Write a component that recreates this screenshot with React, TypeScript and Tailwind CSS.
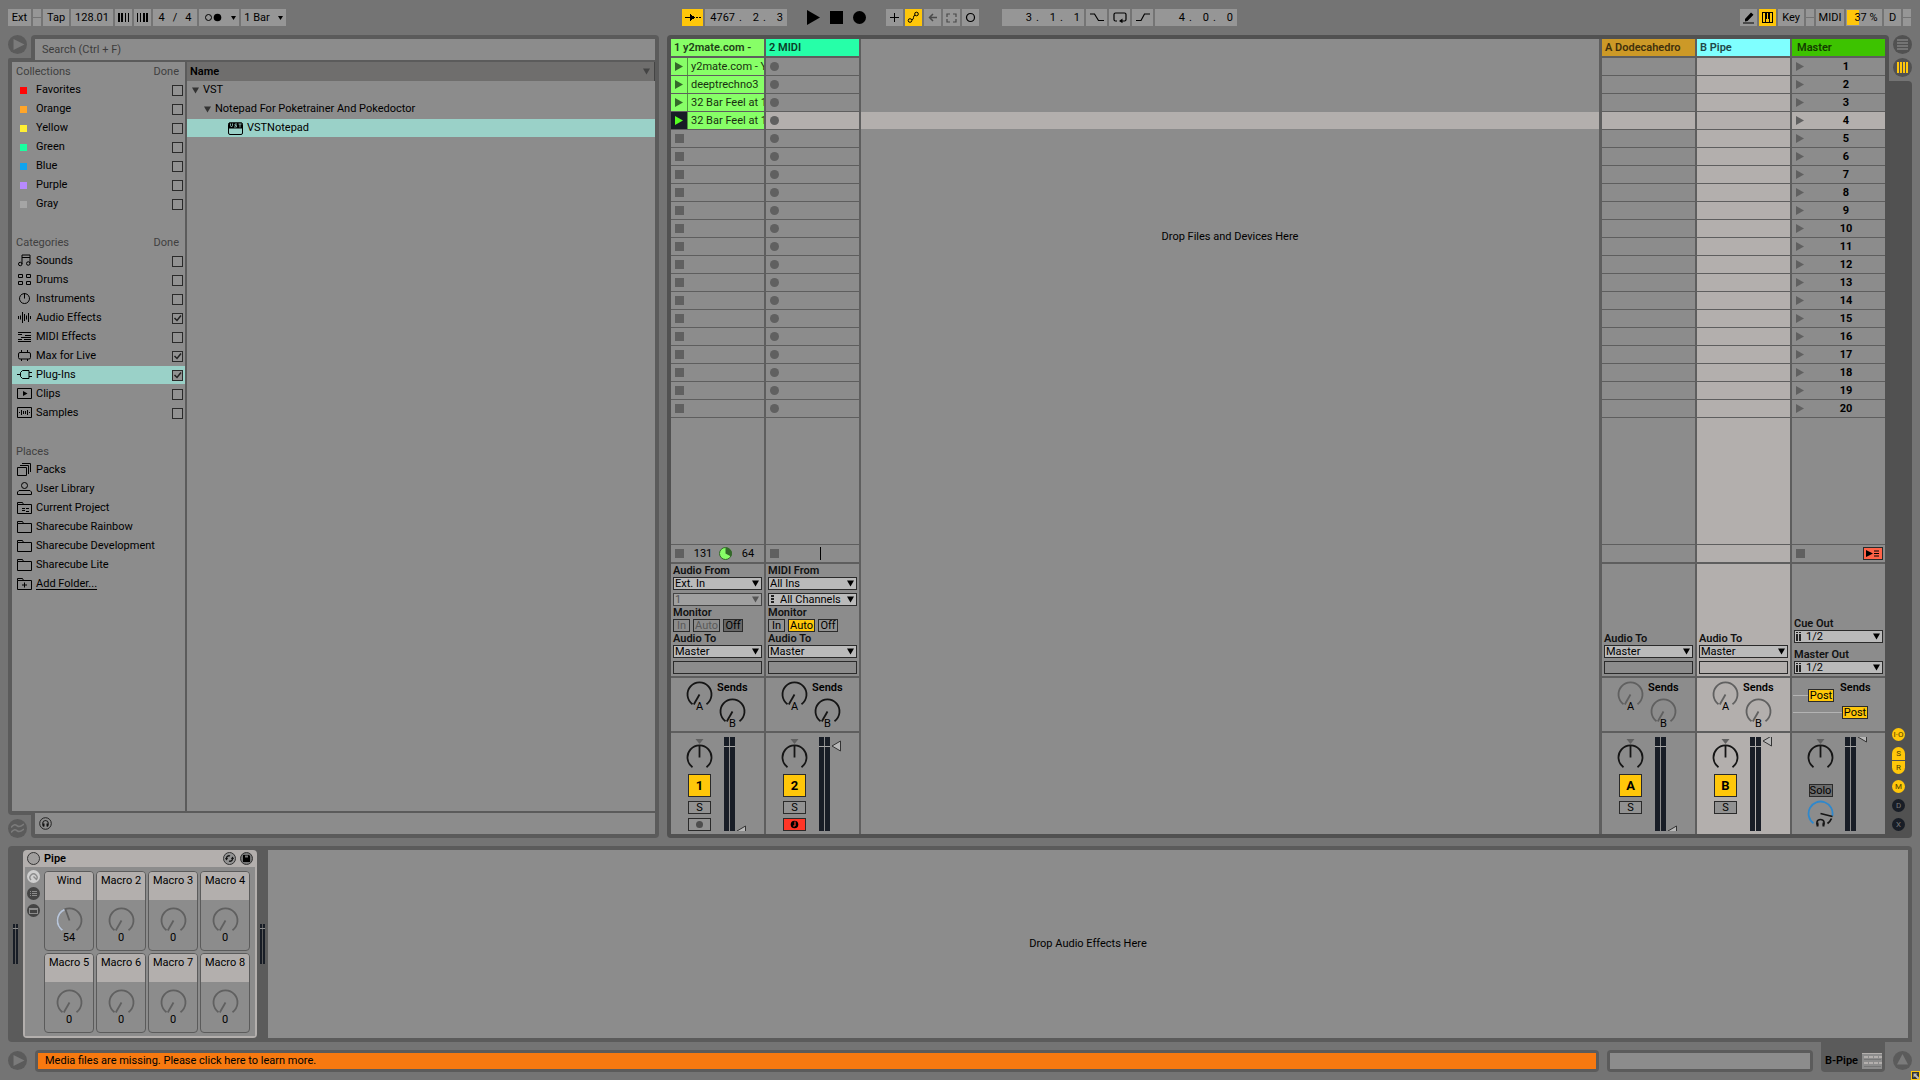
import React from "react";

const frame = "bg-[#5b5b5b]";

/* ---------- toolbar ---------- */

function Tool({ label, className = "", children }: { label?: string; className?: string; children?: React.ReactNode }) {
  return (
    <button aria-label={label} className={`flex h-[17px] shrink-0 items-center justify-center bg-[#969696] leading-none ${className}`}>
      {children}
    </button>
  );
}

function Nudge({ label }: { label: string }) {
  return (
    <span className="flex w-2 flex-col gap-px">
      <button aria-label={`${label} up`} className="h-2 bg-[#969696]" />
      <button aria-label={`${label} down`} className="h-2 bg-[#969696]" />
    </span>
  );
}

function Position({ label, values }: { label: string; values: string[] }) {
  return (
    <div role="group" aria-label={label} className="flex h-[17px] w-[82px] shrink-0 items-center justify-end bg-[#969696] pr-1">
      <span>{values[0]}</span>
      {values.slice(1).map((v, i) => (
        <span key={i} className="flex w-6 justify-between pl-1">
          <span>.</span>
          <span>{v}</span>
        </span>
      ))}
    </div>
  );
}

function Toolbar() {
  return (
    <header className="grid h-[35px] shrink-0 grid-cols-[1fr_auto_1fr] items-center pr-[9px] pl-2">
      <div className="flex gap-[2px]">
        <Tool className="w-[23px]">Ext</Tool>
        <Nudge label="Nudge" />
        <Tool className="w-[26px]">Tap</Tool>
        <Tool className="w-[42px]">128.01</Tool>
        <Tool label="Phase nudge down" className="w-[17px]">
          <svg width="12" height="9" shapeRendering="crispEdges">
            <path d="M0 0h2v9H0zM3 0h2v9H3zM7 0h1v9H7zM10 0h1v9h-1z" />
          </svg>
        </Tool>
        <Tool label="Phase nudge up" className="w-[17px]">
          <svg width="12" height="9" shapeRendering="crispEdges">
            <path d="M0 0h1v9H0zM3 0h1v9H3zM6 0h2v9H6zM9 0h2v9H9z" />
          </svg>
        </Tool>
        <Tool className="w-11 gap-2">
          <span>4</span>
          <span>/</span>
          <span>4</span>
        </Tool>
        <Tool label="Metronome" className="w-10">
          <svg width="32" height="9" className="ml-1">
            <circle cx="3.5" cy="4.5" r="3" fill="none" stroke="#000" />
            <circle cx="12.5" cy="4.5" r="3.8" />
            <path d="M26 3h5l-2.500 4z" />
          </svg>
        </Tool>
        <Tool className="w-[45px] gap-2">
          <span>1 Bar</span>
          <svg width="5" height="4">
            <path d="M0 0h5L2.500 4z" />
          </svg>
        </Tool>
      </div>

      <div className="flex">
        <Tool label="Follow" className="mr-[2px] w-[21px] !bg-[#ffc70a]">
          <svg width="16" height="9" shapeRendering="crispEdges">
            <path d="M0 4h5V1l5 3.500L5 8V5H0zM11 4h2v1h-2zM14 4h2v1h-2z" />
          </svg>
        </Tool>
        <Position label="Arrangement position" values={["4767", "2", "3"]} />
        <div className="ml-5 flex items-center gap-[10px]">
          <button aria-label="Play">
            <svg width="13" height="15" className="block">
              <path d="M0 0l13 7.500L0 15z" />
            </svg>
          </button>
          <button aria-label="Stop" className="size-[13px] bg-black" />
          <button aria-label="Record" className="size-[13px] rounded-full bg-black" />
        </div>
        <div className="ml-5 flex gap-[2px]">
          <Tool label="Overdub" className="w-[17px]">
            <svg width="9" height="9" shapeRendering="crispEdges">
              <path d="M4 0h1v4h4v1H5v4H4V5H0V4h4z" />
            </svg>
          </Tool>
          <Tool label="Automation arm" className="w-[17px] !bg-[#ffc70a]">
            <svg width="13" height="13" fill="none" stroke="#000">
              <circle cx="3" cy="9.500" r="1.800" />
              <circle cx="9.500" cy="3" r="1.800" />
              <path d="M5 9c2 0 1-5 3-5" />
            </svg>
          </Tool>
          <Tool label="Re-enable automation" className="w-[17px]">
            <svg width="9" height="9" fill="none" stroke="#4a4a4a" strokeWidth="1.500">
              <path d="M9 4.500H1M5 1L1.500 4.500 5 8" />
            </svg>
          </Tool>
          <Tool label="Capture" className="w-[17px]">
            <svg width="11" height="10" fill="none" stroke="#4a4a4a" strokeWidth="1.200">
              <path d="M1 4V1h3M7 1h3v3M10 6v3H7M4 9H1V6" />
            </svg>
          </Tool>
          <Tool label="Session record" className="w-[17px]">
            <svg width="11" height="11" fill="none" stroke="#000" strokeWidth="1.200">
              <circle cx="5.500" cy="5.500" r="4" />
            </svg>
          </Tool>
        </div>
        <div className="ml-[23px] flex gap-[2px]">
          <Position label="Loop start" values={["3", "1", "1"]} />
          <Tool label="Punch in" className="w-[21px]">
            <svg width="14" height="9" fill="none" stroke="#000" strokeWidth="1.200">
              <path d="M0 1h4.500l4 6.500H14" />
            </svg>
          </Tool>
          <Tool label="Loop" className="w-[21px]">
            <svg width="14" height="11" fill="none" stroke="#000" strokeWidth="1.200">
              <path d="M4 9H2.500a1.500 1.500 0 0 1-1.500-1.500v-5A1.500 1.500 0 0 1 2.500 1h9A1.500 1.500 0 0 1 13 2.500v5A1.500 1.500 0 0 1 11.500 9H8" />
              <path d="M9.500 6.500L6 9l3.500 2.200z" fill="#000" stroke="none" />
            </svg>
          </Tool>
          <Tool label="Punch out" className="w-[21px]">
            <svg width="14" height="9" fill="none" stroke="#000" strokeWidth="1.200">
              <path d="M0 7.500h5L8.500 1H14" />
            </svg>
          </Tool>
          <Position label="Loop length" values={["4", "0", "0"]} />
        </div>
      </div>

      <div className="flex justify-end gap-[2px]">
        <Tool label="Draw mode" className="w-[17px]">
          <svg width="12" height="12">
            <path d="M2 9.500V7l6-6.500 2.500 2.200-6 6.300zM0 10.500h11v1H0z" />
          </svg>
        </Tool>
        <Tool label="Computer MIDI keyboard" className="w-[17px] !bg-[#ffc70a]">
          <svg width="11" height="11" shapeRendering="crispEdges">
            <path d="M0 0h11v1H0zM0 10h11v1H0zM0 0h1v11H0zM10 0h1v11h-1zM3 0h2v7H3zM6 0h2v7H6zM3 7h1v4H3zM7 7h1v4H7z" />
          </svg>
        </Tool>
        <Tool className="w-[26px]">Key</Tool>
        <Nudge label="Key activity" />
        <Tool className="w-7">MIDI</Tool>
        <div className="flex h-[17px] w-9 items-center justify-center border border-[#969696] bg-[linear-gradient(90deg,#ffc70a_36%,#969696_36%)] pl-1 leading-none">
          37 %
        </div>
        <Tool className="w-[17px]">D</Tool>
        <Nudge label="Disk" />
      </div>
    </header>
  );
}

/* ---------- browser ---------- */

const icons: Record<string, React.ReactNode> = {
  Sounds: <path d="M5 10V1h8v8.500M5 3.500h8M5 10a1.700 1.700 0 1 1-3.500 0A1.700 1.700 0 0 1 5 10zM13 9.500a1.700 1.700 0 1 1-3.500 0 1.700 1.700 0 0 1 3.500 0z" />,
  Drums: <path d="M1.500 1.500h4v3h-4zM9.500 1.500h4v3h-4zM1.500 8.500h4v3h-4zM9.500 8.500h4v3h-4z" />,
  Instruments: <path d="M5 2.200a5 5 0 1 0 5 0A5 5 0 0 0 5 2.200M7.500 1v5.500" />,
  "Audio Effects": <path d="M1.500 5v3M3.500 4.500v4M5.500 1v11M7.500 3v7M9.500 4.500v4M11.500 2v9M13.500 5v3" />,
  "MIDI Effects": <path d="M1 2.500h13M1 4.500h4M8 5.500h6M4 7.500h4M8 7.500h6M1 9.500h4M7 9.500h7M1 11.500h13" strokeWidth="1" />,
  "Max for Live": <path d="M3 3.500h9a1.500 1.500 0 0 1 1.500 1.500v3.500A1.500 1.500 0 0 1 12 10H3a1.500 1.500 0 0 1-1.500-1.500V5A1.500 1.500 0 0 1 3 3.500zM4.500 1v2.500M10.500 1v2.500M4.500 10v2M10.500 10v2" />,
  "Plug-Ins": <path d="M0 6.500h3.500M12 2.500H5.500L3.500 4.500v4l2 2H12zM12 4.500h3M12 8.500h3" />,
  Clips: (
    <>
      <path d="M.5 1.500h14v10H.5z" />
      <path d="M6 4l4.500 2.500L6 9z" fill="#000" stroke="none" />
    </>
  ),
  Samples: <path d="M.5 1.500h14v10H.5zM2.500 6v1M4.500 4v5M6.500 5v3M8.500 5v3M10.500 4v5M12.500 6v1" />,
  Packs: <path d="M.5 4.500h9v8h-9zM3 2.500h8.500V11M5 .5h8.500V9" />,
  "User Library": <path d="M10.500 3.500a3 3 0 1 1-6 0 3 3 0 0 1 6 0zM.5 12.500V10l1.500-1.500h11l1.500 1.500v2.500z" />,
  "Current Project": <path d="M.5 3.500h14v9H.5zM.5 3.500v-2h5l1 2M5 7.500h3M9 7.500h3M5 9.500h3M9 10.500h3" />,
  folder: <path d="M.5 3.500h14v9H.5zM.5 3.500v-2h5l1 2" />,
  "Add Folder...": <path d="M.5 3.500h14v9H.5zM.5 3.500v-2h5l1 2M5 8h5M7.500 5.500v5" />,
};

function RowIcon({ name }: { name: string }) {
  return (
    <svg width="15" height="14" viewBox="0 0 15 14" fill="none" stroke="#000" className="shrink-0">
      {icons[name] ?? icons.folder}
    </svg>
  );
}

function Check({ label, checked = false }: { label: string; checked?: boolean }) {
  return (
    <span className="relative mr-[2px] flex">
      <input type="checkbox" aria-label={`Show ${label}`} defaultChecked={checked} className="peer size-[11px] appearance-none border border-[#2a2a2a] bg-[#929292]" />
      <svg width="11" height="11" fill="none" stroke="#222" strokeWidth="1.500" className="pointer-events-none absolute inset-0 hidden peer-checked:block">
        <path d="M2.500 5l2.500 2.500L9 2.500" />
      </svg>
    </span>
  );
}

function SectionHead({ title, done = true }: { title: string; done?: boolean }) {
  return (
    <div className="mb-px flex h-[18px] items-center justify-between pt-px pr-[6px] pl-1 text-[#404040]">
      <h2>{title}</h2>
      {done && <button>Done</button>}
    </div>
  );
}

const collections = [
  ["Favorites", "bg-[#ff0505]"],
  ["Orange", "bg-[#ffa529]"],
  ["Yellow", "bg-[#fff034]"],
  ["Green", "bg-[#1affa0]"],
  ["Blue", "bg-[#10a4ee]"],
  ["Purple", "bg-[#b88aff]"],
  ["Gray", "bg-[#a5a5a5]"],
];
const categories = ["Sounds", "Drums", "Instruments", "Audio Effects", "MIDI Effects", "Max for Live", "Plug-Ins", "Clips", "Samples"];
const ticked = ["Audio Effects", "Max for Live", "Plug-Ins"];
const places = ["Packs", "User Library", "Current Project", "Sharecube Rainbow", "Sharecube Development", "Sharecube Lite", "Add Folder..."];

function Sidebar() {
  return (
    <nav className="w-[173px] shrink-0 bg-[#8c8c8c]">
      <SectionHead title="Collections" />
      <ul>
        {collections.map(([name, color]) => (
          <li key={name} className="mb-px flex h-[18px] items-center justify-between">
            <button className="flex items-center gap-[9px] pl-2">
              <span className={`size-[7px] ${color}`} />
              {name}
            </button>
            <Check label={name} />
          </li>
        ))}
      </ul>
      <div className="h-[19px]" />
      <SectionHead title="Categories" />
      <ul>
        {categories.map((name) => (
          <li key={name} className={`mb-px flex h-[18px] items-center justify-between ${name === "Plug-Ins" ? "bg-[#9ad1c8]" : ""}`}>
            <button className="flex items-center gap-1 pl-[5px]">
              <RowIcon name={name} />
              {name}
            </button>
            <Check label={name} checked={ticked.includes(name)} />
          </li>
        ))}
      </ul>
      <div className="h-[19px]" />
      <SectionHead title="Places" done={false} />
      <ul>
        {places.map((name) => (
          <li key={name} className="mb-px flex h-[18px] items-center">
            <button className="flex items-center gap-1 pl-[5px]">
              <RowIcon name={name} />
              <span className={name === "Add Folder..." ? "underline underline-offset-2" : ""}>{name}</span>
            </button>
          </li>
        ))}
      </ul>
    </nav>
  );
}

function Down({ className = "" }: { className?: string }) {
  return (
    <svg width="7" height="7" viewBox="0 0 7 7" className={`shrink-0 ${className}`} fill="currentColor">
      <path d="M0 0.500h7L3.500 6.500z" />
    </svg>
  );
}

function RoundButton({ label, children, dark = false }: { label: string; children: React.ReactNode; dark?: boolean }) {
  return (
    <button aria-label={label} className={`flex size-[19px] shrink-0 items-center justify-center rounded-full ${dark ? "bg-[#515151]" : "bg-[#5b5b5b]"}`}>
      {children}
    </button>
  );
}

function Browser() {
  return (
    <section aria-label="Browser" className="flex w-[651px] shrink-0 flex-col">
      <div className="flex h-[25px] shrink-0">
        <div className="flex w-[23px] flex-col justify-between">
          <RoundButton label="Hide browser">
            <svg width="19" height="19" fill="#7b7b7b">
              <path d="M5.500 4l11 5.500-11 5.500z" />
            </svg>
          </RoundButton>
          <div className={`h-[2px] rounded-tl-sm ${frame}`} />
        </div>
        <div className={`flex flex-1 rounded-t px-1 pt-1 ${frame}`}>
          <input
            type="search"
            aria-label="Search"
            placeholder="Search (Ctrl + F)"
            className="h-[21px] w-full bg-[#8c8c8c] px-[7px] text-black outline-none placeholder:text-[#3c3c3c] placeholder:opacity-100"
          />
        </div>
      </div>
      <div className={`flex min-h-0 flex-1 gap-[2px] px-1 py-[2px] pb-0 ${frame}`}>
        <Sidebar />
        <div className="flex-1 bg-[#8c8c8c]">
          <table className="w-full border-collapse text-left">
            <thead>
              <tr className="h-[19px] bg-[#6f6e6d]">
                <th className="p-0 pl-[3px] font-semibold">
                  <span className="flex items-center justify-between border-r border-[#444] pr-1 leading-[19px]">
                    Name
                    <Down className="text-[#444]" />
                  </span>
                </th>
              </tr>
            </thead>
            <tbody>
              <tr>
                <td className="p-0 pb-px">
                  <span className="flex h-[18px] items-center gap-1 pl-[5px]">
                    <Down className="text-[#333]" />
                    VST
                  </span>
                </td>
              </tr>
              <tr>
                <td className="p-0 pb-px">
                  <span className="flex h-[18px] items-center gap-1 pl-[17px]">
                    <Down className="text-[#333]" />
                    Notepad For Poketrainer And Pokedoctor
                  </span>
                </td>
              </tr>
              <tr>
                <td className="p-0 pb-px">
                  <span className="flex h-[18px] items-center gap-1 bg-[#9ad1c8] pl-[41px]">
                    <svg width="15" height="13" fill="none" stroke="#000">
                      <rect x=".5" y="1" width="14" height="11.500" rx="1.500" />
                      <path d="M1 1h13v5H1z" fill="#000" />
                      <path d="M2.500 1.500v2l1 1.500 1-1.500v-2M9 2H7v1.500h1.500V5H6M10.500 2h3M12 2v3.500" stroke="#9ad1c8" strokeWidth=".8" />
                    </svg>
                    VSTNotepad
                  </span>
                </td>
              </tr>
            </tbody>
          </table>
        </div>
      </div>
      <div className="flex h-[27px] shrink-0">
        <div className="flex w-[23px] shrink-0 flex-col gap-1">
          <div className={`h-1 rounded-bl ${frame}`} />
          <RoundButton label="Groove pool">
            <svg width="13" height="11" fill="none" stroke="#7b7b7b" strokeWidth="1.600">
              <path d="M0 4.500c3-4 4.500-3 6.500-1.500S10.500 3 13 1M0 9.500c3-4 4.500-3 6.500-1.500S10.500 8 13 6" />
            </svg>
          </RoundButton>
        </div>
        <div className={`flex flex-1 rounded-b px-1 pt-[2px] pb-1 ${frame}`}>
          <div className="flex flex-1 items-center bg-[#8c8c8c] pl-1">
            <button aria-label="Preview">
              <svg width="13" height="13" fill="none" stroke="#222" className="block">
                <circle cx="6.500" cy="6.500" r="5.800" />
                <path d="M4.500 9.500C3 7 3.500 3.500 6.500 3.500S10 7 8.500 9.500" strokeWidth="1.200" />
                <path d="M4 6.500h1.500v3H4zM7.500 6.500H9v3H7.500z" fill="#111" stroke="none" />
              </svg>
            </button>
          </div>
        </div>
      </div>
    </section>
  );
}

/* ---------- session ---------- */

function Knob({
  label,
  tone = "#151515",
  value = "",
  angle = 210,
  className = "",
  labelTop = "top-5",
}: {
  label?: string;
  tone?: string;
  value?: string;
  angle?: number;
  className?: string;
  labelTop?: string;
}) {
  const a = (angle * Math.PI) / 180;
  return (
    <div role="img" aria-label={`${label ?? value} knob`} className={`relative h-[27px] w-[27px] shrink-0 ${className}`}>
      <svg width="27" height="27" fill="none" stroke={tone} strokeWidth="1.800" className="block">
        <path d="M6.500 23.200A12 12 0 1 1 20.500 23.200" />
        <path d={`M13.5 13.500L${13.5 + 11.5 * Math.sin(a)} ${13.5 - 11.5 * Math.cos(a)}`} />
      </svg>
      {label && <span className={`absolute inset-x-0 text-center leading-3 ${labelTop}`}>{label}</span>}
    </div>
  );
}

function Select({ label, text, muted = false, prefix = "" }: { label: string; text: string; muted?: boolean; prefix?: "" | "dots" | "bars" }) {
  return (
    <span className={`relative flex h-[13px] border ${muted ? "border-[#444] bg-[#a0a0a0] text-[#555]" : "border-[#2a2a2a] bg-[#bababa] text-black"}`}>
      {prefix === "dots" && (
        <svg width="10" height="11" className="shrink-0">
          <path d="M2 1h3v2H2zM2 4h3v2H2zM2 7h3v2H2z" fill="#222" />
        </svg>
      )}
      {prefix === "bars" && (
        <svg width="10" height="11" className="shrink-0">
          <path d="M1 1h2v1H1zM1 3h2v7H1zM4 1h2v1H4zM4 3h2v7H4z" fill="#222" />
        </svg>
      )}
      <select aria-label={label} disabled={muted} className="h-[11px] w-full appearance-none pl-px leading-[11px] opacity-100">
        <option>{text}</option>
      </select>
      <Down className="pointer-events-none absolute top-[2px] right-[2px]" />
    </span>
  );
}

function Square() {
  return <span className="size-[9px] shrink-0 bg-[#606060]" />;
}

function PlayTri({ color }: { color: string }) {
  return (
    <svg width="8" height="9" className="shrink-0" fill={color}>
      <path d="M0 0l8 4.500L0 9z" />
    </svg>
  );
}

function Meter({ handle }: { handle: number }) {
  return (
    <div className="flex gap-px">
      <svg width="11" height="94" shapeRendering="crispEdges" className="block">
        <path d="M0 0h5v94H0zM6 0h5v94H6z" fill="#181d26" />
        <path d="M0 9h11v1H0z" fill="#a5a5a5" />
      </svg>
      <svg width="11" height="94" className="block overflow-hidden" fill="#b8b8b8" stroke="#333">
        <path d={`M1 ${handle}L9.500 ${handle - 5}V${handle + 5}z`} />
      </svg>
    </div>
  );
}

function SmallButton({ children, className, label }: { children: React.ReactNode; className: string; label?: string }) {
  return (
    <button aria-label={label} className={`flex h-[13px] shrink-0 items-center justify-center border border-[#2a2a2a] leading-none ${className}`}>
      {children}
    </button>
  );
}

type Kind = "audio" | "midi" | "return" | "master";

function MonitorRow({ active }: { active: "Auto" | "Off" }) {
  const off = active === "Off";
  return (
    <div className="flex gap-[3px]">
      <SmallButton className={`w-[17px] ${off ? "text-[#5a5a5a]" : "bg-[#929292]"}`}>In</SmallButton>
      <SmallButton className={`w-[27px] ${off ? "text-[#5a5a5a]" : "bg-[#ffc70a]"}`}>Auto</SmallButton>
      <SmallButton className={`w-5 ${off ? "bg-[#686868]" : "bg-[#929292]"}`}>Off</SmallButton>
    </div>
  );
}

function InOut({ kind }: { kind: Kind }) {
  const label = "h-[13px] font-semibold leading-[14px] text-[#111]";
  if (kind === "master")
    return (
      <>
        <span className={label}>Cue Out</span>
        <Select label="Cue Out" text="1/2" prefix="bars" />
        <span className={`mt-[5px] ${label}`}>Master Out</span>
        <Select label="Master Out" text="1/2" prefix="bars" />
      </>
    );
  return (
    <>
      {kind !== "return" && (
        <>
          <span className={label}>{kind === "audio" ? "Audio From" : "MIDI From"}</span>
          <Select label="Input type" text={kind === "audio" ? "Ext. In" : "All Ins"} />
          <div className="mt-[3px] flex flex-col">
            {kind === "audio" ? <Select label="Input channel" text="1" muted /> : <Select label="Input channel" text="All Channels" prefix="dots" />}
          </div>
          <span className={label}>Monitor</span>
          <MonitorRow active={kind === "audio" ? "Off" : "Auto"} />
        </>
      )}
      <span className={label}>Audio To</span>
      <Select label="Audio To" text="Master" />
      <div className="mt-[3px] h-[13px] border border-[#2a2a2a]" />
    </>
  );
}

function SlotRow({ kind, index, clip, selected }: { kind: Kind; index: number; clip?: string; selected: boolean }) {
  if (clip) {
    const playing = index === 3;
    return (
      <div className="flex h-[17px] shrink-0 gap-px bg-[#4f9a3c]">
        <button aria-label={`Launch ${clip}`} className={`flex w-4 shrink-0 items-center pl-1 ${playing ? "bg-[#181d26]" : "bg-[#87ff67]"}`}>
          <PlayTri color={playing ? "#55ff22" : "#34682a"} />
        </button>
        <span className="min-w-0 flex-1 overflow-hidden bg-[#87ff67] pl-[3px] leading-[17px] whitespace-nowrap text-[#183010]">{clip}</span>
      </div>
    );
  }
  return (
    <div className={`flex h-[17px] shrink-0 items-center pl-1 ${selected ? "bg-[#b3afad]" : "bg-[#8c8c8c]"}`}>
      {kind === "audio" && <Square />}
      {kind === "midi" && <span className="size-[9px] rounded-full bg-[#606060]" />}
      {kind === "master" && (
        <>
          <PlayTri color="#606060" />
          <span className="flex-1 pl-[3px] text-center font-bold">{index + 1}</span>
        </>
      )}
    </div>
  );
}

const clips = ["y2mate.com - Y", "deeptrechno3", "32 Bar Feel at 1", "32 Bar Feel at 1"];

function Sends({ kind }: { kind: Kind }) {
  if (kind === "master")
    return (
      <div className="flex flex-col pt-1 pl-px">
        <div className="flex items-start">
          <span className="mt-[13px] h-px w-[15px] shrink-0 bg-[#b3b3b3]" />
          <SmallButton className="mt-[7px] w-[26px] bg-[#ffc70a]">Post</SmallButton>
          <span className="ml-[6px] leading-3 font-semibold">Sends</span>
        </div>
        <div className="mt-1 flex items-center">
          <span className="h-px w-[49px] shrink-0 bg-[#b3b3b3]" />
          <SmallButton className="w-[26px] bg-[#ffc70a]">Post</SmallButton>
        </div>
      </div>
    );
  const tone = kind === "return" ? "#606060" : "#151515";
  return (
    <div className="flex gap-1 pl-[15px]">
      <Knob label="A" tone={tone} className="mt-[3px]" />
      <div className="flex flex-col items-center pt-1">
        <span className="h-4 leading-3 font-semibold">Sends</span>
        <Knob label="B" tone={tone} />
      </div>
    </div>
  );
}

function Mixer({ kind, name, handle }: { kind: Kind; name: string; handle: number }) {
  return (
    <div className="flex gap-[11px] pt-1 pl-[15px]">
      <div className="flex w-[27px] flex-col items-center">
        <svg width="9" height="5" className="mt-[2px]" fill="#606060">
          <path d="M0.500 0h8L4.500 5z" />
        </svg>
        <Knob value="Pan" angle={0} />
        {kind === "master" ? (
          <>
            <SmallButton className="mt-[13px] w-6 bg-[#6c6c6c]">Solo</SmallButton>
            <svg width="27" height="27" fill="none" strokeWidth="1.800" className="mt-[3px] shrink-0">
              <path d="M6.500 23.200A12 12 0 1 1 25.300 16" stroke="#2f88cc" />
              <path d="M13.500 13.500l12 3M24.500 18.500a12 12 0 0 1-4 5" stroke="#151515" />
              <path d="M11 25.500c-2-2-1.500-6 2.500-6s4.500 4 2.500 6" stroke="#151515" strokeWidth="1.500" />
              <path d="M9.500 22.500h2v4h-2zM15.500 22.500h2v4h-2z" fill="#151515" stroke="none" />
            </svg>
          </>
        ) : (
          <>
            <button className="mt-[3px] flex size-[23px] shrink-0 items-center justify-center border border-[#2a2a2a] bg-[#ffc70a] text-[13px] leading-none font-bold">{name}</button>
            <SmallButton className="mt-1 w-[23px] bg-[#929292]">S</SmallButton>
            {kind === "audio" && (
              <SmallButton label="Arm" className="mt-1 w-[23px] bg-[#929292]">
                <span className="size-[7px] rounded-full bg-[#4e4e4e]" />
              </SmallButton>
            )}
            {kind === "midi" && (
              <SmallButton label="Disarm" className="mt-1 w-[23px] bg-[#ff3526]">
                <svg width="9" height="9">
                  <circle cx="4.500" cy="4.500" r="3.800" />
                  <path d="M5 1.500v4.500M3 6h2" stroke="#ff3526" strokeWidth="1.200" />
                </svg>
              </SmallButton>
            )}
          </>
        )}
      </div>
      <Meter handle={handle} />
    </div>
  );
}

function Status({ kind }: { kind: Kind }) {
  return (
    <>
      {kind !== "return" && <Square />}
      {kind === "audio" && (
        <>
          <span className="w-[35px] shrink-0 pl-[3px] text-center">131</span>
          <svg width="13" height="13" className="shrink-0">
            <circle cx="6.500" cy="6.500" r="6" fill="#87ff67" stroke="#34682a" />
            <path d="M6.500 6.500V.5A6 6 0 0 1 12 9.500z" fill="#34682a" />
          </svg>
          <span className="flex-1 text-center">64</span>
        </>
      )}
      {kind === "midi" && <span className="ml-[41px] h-[13px] w-px bg-black" />}
      {kind === "master" && (
        <SmallButton label="Back to arrangement" className="mr-[2px] ml-auto w-5 bg-[#ff6247]">
          <svg width="14" height="9">
            <path d="M0 1l7 3.500L0 8zM8 1.500h5v1H8zM8 4h5v1H8zM8 6.500h5v1H8z" />
          </svg>
        </SmallButton>
      )}
    </>
  );
}

function Track({ kind, title, color, name = "", handle, selected = false }: { kind: Kind; title: string; color: string; name?: string; handle: number; selected?: boolean }) {
  const bg = selected ? "bg-[#b3afad]" : "bg-[#8c8c8c]";
  return (
    <article aria-label={title} className="flex w-[93px] shrink-0 flex-col">
      <h3 className={`mb-[2px] h-[17px] shrink-0 overflow-hidden leading-[17px] font-semibold whitespace-nowrap ${kind === "master" ? "pl-[5px]" : "pl-[3px]"} ${color}`}>{title}</h3>
      <div className="flex flex-col gap-px">
        {Array.from({ length: 20 }, (_, i) => (
          <SlotRow key={i} kind={kind} index={i} clip={kind === "audio" ? clips[i] : undefined} selected={selected || i === 3} />
        ))}
      </div>
      <div className={`mt-px min-h-0 flex-1 ${bg}`} />
      <div className={`mt-px flex h-[17px] shrink-0 items-center pl-1 ${bg}`}>
        <Status kind={kind} />
      </div>
      <div className={`mt-[2px] flex h-28 shrink-0 flex-col justify-end px-[2px] pb-[2px] ${bg}`}>
        <InOut kind={kind} />
      </div>
      <div className={`mt-[2px] h-[53px] shrink-0 ${bg}`}>
        <Sends kind={kind} />
      </div>
      <div className={`mt-[2px] h-[101px] shrink-0 ${bg}`}>
        <Mixer kind={kind} name={name} handle={handle} />
      </div>
    </article>
  );
}

function Dot({ children, className }: { children: string; className: string }) {
  return <button className={`flex h-[13px] w-[13px] items-center justify-center text-[8px] leading-none ${className}`}>{children}</button>;
}

function Session() {
  return (
    <section aria-label="Session" className="flex min-w-0 flex-1">
      <div className="flex min-w-0 flex-1 rounded-t rounded-bl bg-[#515151] p-1">
        <div className="flex min-w-0 flex-1 gap-[2px] bg-[#5e5e5e]">
          <Track kind="audio" title="1 y2mate.com -" color="bg-[#87ff67] text-[#204018]" name="1" handle={94} />
          <Track kind="midi" title="2 MIDI" color="bg-[#26ffa8] text-[#0a4028]" name="2" handle={9} />
          <div className="flex min-w-0 flex-1 flex-col bg-[#8c8c8c]">
            <div className="h-[73px] shrink-0" />
            <div className="h-[17px] shrink-0 bg-[#b3afad]" />
            <p className="pt-[100px] text-center">Drop Files and Devices Here</p>
          </div>
          <div className="ml-px flex gap-[2px]">
            <Track kind="return" title="A Dodecahedro" color="bg-[#cc9927] text-[#40300c]" name="A" handle={94} />
            <Track kind="return" title="B Pipe" color="bg-[#7fffff] text-[#204848]" name="B" handle={4} selected />
            <Track kind="master" title="Master" color="bg-[#3dc300] text-[#133c00]" handle={0} />
          </div>
        </div>
      </div>
      <div className="flex w-[23px] shrink-0 flex-col">
        <div className="flex h-[46px] shrink-0 flex-col gap-1 pl-1">
          <RoundButton label="Arrangement view" dark>
            <svg width="11" height="11" shapeRendering="crispEdges">
              <path d="M0 0h11v2H0zM0 3h11v2H0zM0 6h11v2H0zM0 9h11v2H0z" fill="#747474" />
            </svg>
          </RoundButton>
          <RoundButton label="Session view" dark>
            <svg width="11" height="11" shapeRendering="crispEdges">
              <path d="M0 0h2v11H0zM3 0h2v11H3zM6 0h2v11H6zM9 0h2v11H9z" fill="#ffc70a" />
            </svg>
          </RoundButton>
        </div>
        <div className="flex flex-1 flex-col justify-end rounded-tr rounded-br bg-[#515151] pb-[7px] pl-[3px] text-[#4c3c00]">
          <Dot className="mb-[6px] rounded-full bg-[#ffc70a]">I·O</Dot>
          <Dot className="mb-px rounded-t-full bg-[#ffc70a]">S</Dot>
          <Dot className="mb-[6px] rounded-b-full bg-[#ffc70a]">R</Dot>
          <Dot className="mb-[6px] rounded-full bg-[#ffc70a]">M</Dot>
          <Dot className="mb-[6px] rounded-full bg-[#181d26] text-[#777]">D</Dot>
          <Dot className="rounded-full bg-[#181d26] text-[#777]">X</Dot>
        </div>
      </div>
    </section>
  );
}

/* ---------- device view ---------- */

function MiniMeter() {
  return (
    <svg width="5" height="40" shapeRendering="crispEdges" className="shrink-0">
      <path d="M0 0h2v40H0zM3 0h2v40H3z" fill="#181d26" />
      <path d="M0 4h5v1H0z" fill="#8c8c8c" />
    </svg>
  );
}

function Macro({ name, value }: { name: string; value: string }) {
  const wind = name === "Wind";
  return (
    <div className="flex h-20 w-[50px] flex-col items-center overflow-hidden rounded-[4px] border border-[#5b5b5b]">
      <span className="h-7 w-full shrink-0 bg-[#b3afad] text-center leading-[17px] whitespace-nowrap">{name}</span>
      <div className="relative mt-[7px]">
        <Knob label={value} tone="#606060" angle={wind ? -20 : 210} labelTop="top-[25px]" />
        {wind && (
          <svg width="27" height="27" fill="none" stroke="#b9c6da" strokeWidth="1.800" className="absolute inset-0">
            <path d="M6.500 23.200A12 12 0 0 1 8.500 2.600" />
          </svg>
        )}
      </div>
    </div>
  );
}

function HeadButton({ label, children, className = "" }: { label: string; children: React.ReactNode; className?: string }) {
  return (
    <button aria-label={label} className={`flex size-[13px] shrink-0 items-center justify-center rounded-full ${className}`}>
      {children}
    </button>
  );
}

function Devices() {
  const macros = ["Wind", "Macro 2", "Macro 3", "Macro 4", "Macro 5", "Macro 6", "Macro 7", "Macro 8"];
  return (
    <section aria-label="Device view" className={`mx-2 mt-2 flex h-[196px] shrink-0 items-center rounded-t rounded-bl p-1 pl-[5px] ${frame}`}>
      <MiniMeter />
      <div className="ml-[5px] flex h-full w-[234px] shrink-0 flex-col rounded-[4px] bg-[#b3afad] px-[2px] pb-[2px]">
        <div className="flex h-[17px] shrink-0 items-center gap-1 px-[2px]">
          <HeadButton label="Device activator" className="border border-[#333] bg-[#a09e9d]">
            {null}
          </HeadButton>
          <span className="flex-1 font-semibold">Pipe</span>
          <HeadButton label="Hot-swap" className="border border-[#333] bg-[#929292]">
            <svg width="9" height="9" fill="none" stroke="#111" strokeWidth="1.300">
              <path d="M1.500 5.500V4A2.500 2.500 0 0 1 5 2M7.500 3.500V5A2.500 2.500 0 0 1 4 7" />
              <path d="M0 4h3L1.500 6.500zM6 5h3L7.500 2.500z" fill="#111" stroke="none" />
            </svg>
          </HeadButton>
          <HeadButton label="Save preset" className="border border-[#333] bg-[#777]">
            <svg width="7" height="7">
              <path fillRule="evenodd" d="M0 0h6l1 1v6H0zM2 0.500v2h3v-2z" />
            </svg>
          </HeadButton>
        </div>
        <div className="flex flex-1 bg-[#8c8c8c] pt-1 pl-[2px]">
          <div className="-mt-px flex w-[17px] flex-col gap-1">
            <HeadButton label="Show macros" className="bg-[#cfcfcf]">
              <svg width="9" height="9" fill="none" stroke="#8c8c8c" strokeWidth="1.400">
                <path d="M2 8A3.500 3.500 0 1 1 7 8M4.500 4.500L7.500 7.500" />
              </svg>
            </HeadButton>
            <HeadButton label="Show chains" className="bg-[#444]">
              <svg width="7" height="7" shapeRendering="crispEdges" fill="#8c8c8c">
                <path d="M0 1h1v1H0zM2 1h5v1H2zM0 3h1v1H0zM2 3h5v1H2zM0 5h1v1H0zM2 5h5v1H2z" />
              </svg>
            </HeadButton>
            <HeadButton label="Show devices" className="bg-[#444]">
              <svg width="9" height="6" fill="none" stroke="#8c8c8c" shapeRendering="crispEdges">
                <path d="M.5.5h8v5h-8zM0 1.500h9" />
              </svg>
            </HeadButton>
          </div>
          <div className="grid grid-cols-4 content-start gap-[2px]">
            {macros.map((m, i) => (
              <Macro key={m} name={m} value={i === 0 ? "54" : "0"} />
            ))}
          </div>
        </div>
      </div>
      <div className="ml-[3px] flex">
        <MiniMeter />
      </div>
      <div className="ml-[3px] flex h-full flex-1 items-center justify-center bg-[#8c8c8c]">Drop Audio Effects Here</div>
    </section>
  );
}

function Footer() {
  return (
    <footer className="flex h-[38px] shrink-0 items-start gap-2 px-2">
      <div className="mt-[9px]">
        <RoundButton label="Show info">
          <svg width="19" height="19" fill="#7b7b7b">
            <path d="M5.500 4l11 5.500-11 5.500z" />
          </svg>
        </RoundButton>
      </div>
      <div className={`mt-2 flex h-[22px] flex-1 rounded p-[3px] ${frame}`}>
        <button className="flex-1 bg-[#f77910] pl-[7px] text-left leading-4">Media files are missing. Please click here to learn more.</button>
      </div>
      <div className={`mt-2 flex h-[22px] w-[206px] rounded p-[3px] ${frame}`}>
        <div className="flex-1 bg-[#8c8c8c]" />
      </div>
      <button className={`flex h-[30px] w-16 items-end justify-between rounded-b pr-[3px] pb-[3px] pl-1 ${frame}`}>
        <span className="leading-4 font-semibold whitespace-nowrap">B-Pipe</span>
        <svg width="20" height="16" shapeRendering="crispEdges" className="shrink-0">
          <path d="M0 0h20v16H0z" fill="#8c8c8c" />
          <path d="M0 0h20v1H0zM2 3h4v2H2zM7 3h4v2H7zM12 3h4v2h-4zM17 3h3v2h-3zM2 9h4v2H2zM7 9h4v2H7zM12 9h4v2h-4zM17 9h3v2h-3z" fill="#b3afad" />
          <path d="M2 6h17v1H2zM2 13h17v1H2z" fill="#777" />
        </svg>
      </button>
      <div className="mt-[9px]">
        <RoundButton label="Toggle device view">
          <svg width="19" height="19" fill="#7b7b7b">
            <path d="M9.500 3l5.500 10.500H4z" />
          </svg>
        </RoundButton>
      </div>
    </footer>
  );
}

export default function App() {
  return (
    <main className="relative flex h-screen min-h-[900px] min-w-[1400px] flex-col overflow-hidden bg-[#747474] font-['Roboto',sans-serif] text-[11px] leading-4 font-normal text-black">
      <Toolbar />
      <div className="flex min-h-0 flex-1 gap-2 px-2">
        <Browser />
        <Session />
      </div>
      <Devices />
      <Footer />
      <svg width="9" height="9" className="absolute right-0 bottom-0">
        <path d="M0 0h9v9H0z" fill="#ffc70a" />
        <path d="M1 1h7v7H1z" fill="#333" />
        <path d="M2.500 2.500v4l1.300-1.300L7 8.500 8.500 7 5.200 3.800 6.500 2.500z" fill="#bbb" />
      </svg>
    </main>
  );
}
